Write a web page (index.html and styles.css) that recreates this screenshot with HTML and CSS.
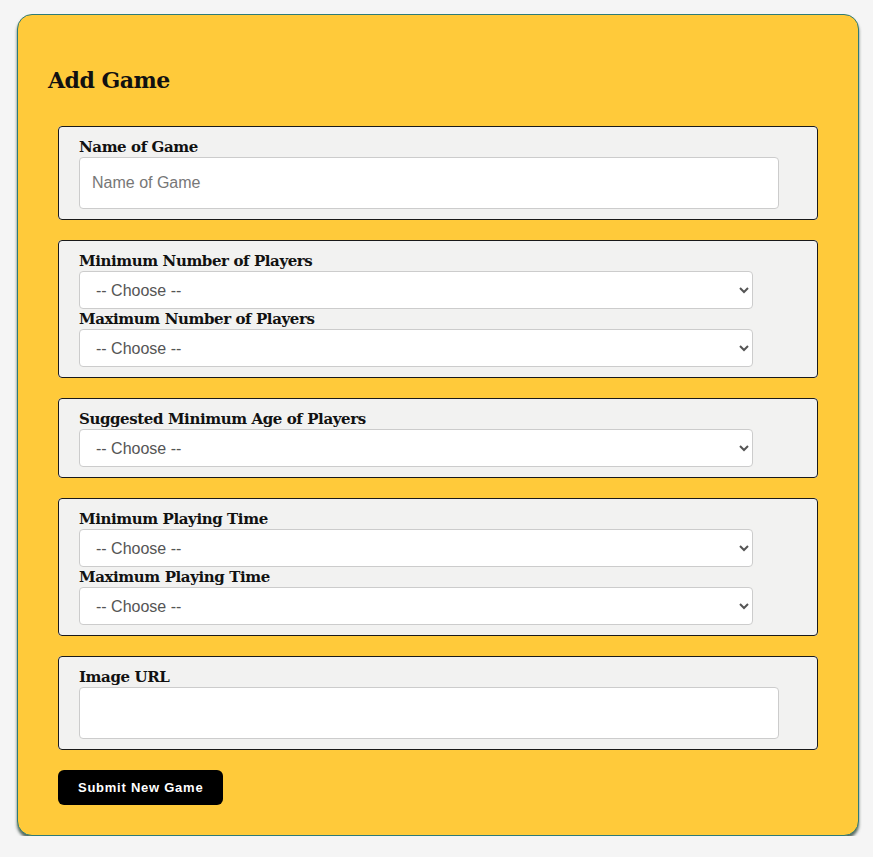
FILE: index.html
```html
<!DOCTYPE html>
<html>
<head>
<meta charset="utf-8">
<link rel="stylesheet" href="styles.css">
</head>
<body>
<div class="card">
  <h2 class="title">Add Game</h2>
  <form class="form">
    <fieldset class="group">
      <label class="label">Name of Game</label>
      <input class="text-input" type="text" placeholder="Name of Game">
    </fieldset>
    <fieldset class="group">
      <label class="label">Minimum Number of Players</label>
      <select class="select"><option>-- Choose --</option></select>
      <label class="label">Maximum Number of Players</label>
      <select class="select"><option>-- Choose --</option></select>
    </fieldset>
    <fieldset class="group">
      <label class="label">Suggested Minimum Age of Players</label>
      <select class="select"><option>-- Choose --</option></select>
    </fieldset>
    <fieldset class="group">
      <label class="label">Minimum Playing Time</label>
      <select class="select"><option>-- Choose --</option></select>
      <label class="label">Maximum Playing Time</label>
      <select class="select"><option>-- Choose --</option></select>
    </fieldset>
    <fieldset class="group">
      <label class="label">Image URL</label>
      <input class="text-input" type="text">
    </fieldset>
    <button class="submit" type="button">Submit New Game</button>
  </form>
</div>
</body>
</html>
```

FILE: styles.css
```css
html, body {
  margin: 0;
  padding: 0;
  background: #f5f5f5;
}
body {
  padding: 14px 14px 0 17px;
  font-family: "DejaVu Serif", serif;
}
.card {
  background: #ffca3a;
  border: 1px solid #2f7b78;
  border-radius: 15px;
  box-shadow: 0 3px 3px rgba(50, 70, 60, 0.8);
  padding: 30px 30px 30px;
}
.title {
  font-family: "DejaVu Serif", serif;
  font-size: 22px;
  letter-spacing: -0.5px;
  font-weight: bold;
  line-height: 32px;
  margin: 19px 0 30px;
  color: #111;
}
.form {
  padding: 0 10px;
  display: flex;
  flex-direction: column;
  align-items: flex-start;
  gap: 20px;
}
.group {
  box-sizing: border-box;
  width: 100%;
  margin: 0;
  border: 1px solid #1a1a1a;
  border-radius: 4px;
  background: #f2f2f1;
  padding: 10px 38px 10px 20px;
  display: flex;
  flex-direction: column;
  align-items: flex-start;
}
.label {
  font-family: "DejaVu Serif", serif;
  font-weight: bold;
  font-size: 15px;
  letter-spacing: -0.4px;
  line-height: 20px;
  color: #111;
}
.text-input {
  box-sizing: border-box;
  width: 700px;
  height: 52px;
  border: 1px solid #ccc;
  border-radius: 4px;
  background: #fff;
  padding: 0 12px;
  font-family: "Liberation Sans", Arial, sans-serif;
  font-size: 16px;
  color: #333;
  outline: none;
}
.text-input::placeholder {
  color: #777;
}
.select {
  box-sizing: border-box;
  width: 674px;
  height: 38px;
  border: 1px solid #ccc;
  border-radius: 4px;
  background: #fff;
  padding: 0 12px;
  font-family: "Liberation Sans", Arial, sans-serif;
  font-size: 16px;
  color: #555;
}
.submit {
  background: #000;
  color: #fff;
  border: none;
  border-radius: 6px;
  height: 35px;
  padding: 0 20px;
  font-family: "Liberation Sans", Arial, sans-serif;
  font-size: 13px;
  font-weight: bold;
  letter-spacing: 0.75px;
}
```
